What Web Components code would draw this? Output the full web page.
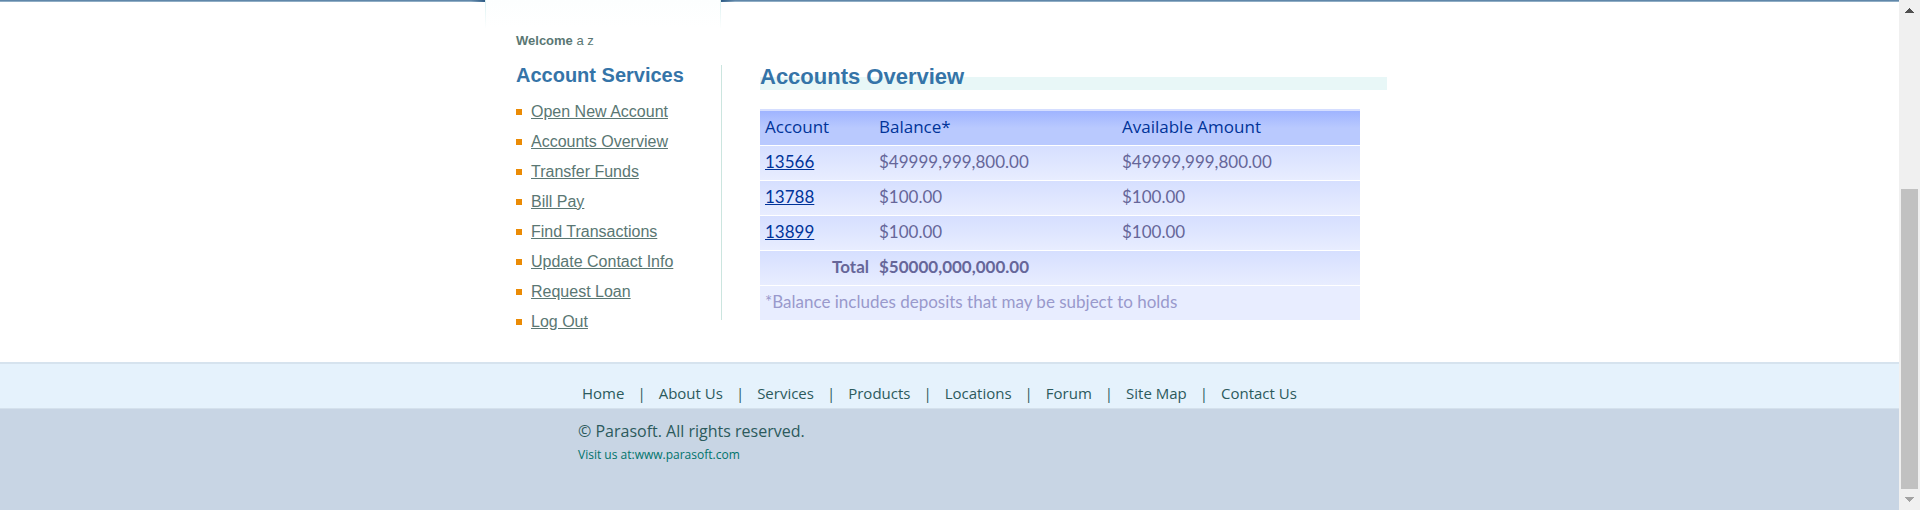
<!DOCTYPE html>
<html lang="en">
<head>
<meta charset="utf-8">
<title>ParaBank | Accounts Overview</title>
<style>
html, body { margin: 0; height: 100%; }
body { background: #c8d5e4; font-family: "Liberation Sans", Arial, sans-serif; }
</style>
</head>
<body>
<bank-page></bank-page>

<script>
function define(name, html) {
  const template = document.createElement("template");
  template.innerHTML = html;
  customElements.define(name, class extends HTMLElement {
    constructor() {
      super();
      this.attachShadow({ mode: "open" }).append(template.content.cloneNode(true));
    }
  });
}

define("header-edge", `
<style>
:host { display: grid; grid-template-columns: 1fr minmax(0, 929px) 1fr; height: 28px; }
.inner { display: grid; grid-template-columns: 236px 1fr; }
.line { height: 2px; background: linear-gradient(#6087a9 50%, #8fadc5 50%); }
.left { background: linear-gradient(90deg, transparent calc(100% - 14px), #2f5c86), linear-gradient(#6087a9 50%, #8fadc5 50%); }
.right { background: linear-gradient(270deg, transparent calc(100% - 14px), #2f5c86), linear-gradient(#6087a9 50%, #8fadc5 50%); }
.tab { box-sizing: border-box; border: solid; border-width: 0 1px;
  border-image: linear-gradient(#d8efef, #fff) 1; background: linear-gradient(#fcfefe, #fff); }
</style>
<div class="line left"></div>
<div class="inner"><div class="tab"></div><div class="line right"></div></div>
<div class="line"></div>`);

define("service-menu", `
<style>
:host { display: block; }
h2 { margin: 0; font: bold 20px/20px "Liberation Sans", Arial, sans-serif; color: #3574a8; }
ul { list-style: none; margin: 12px 0 0; padding: 0; }
li { display: flex; align-items: center; gap: 9px; height: 30px; font-size: 16px; line-height: 30px; }
li::before { content: ""; width: 6px; height: 6px; background: #eb8b05; }
a { color: #5a7773; }
</style>
<h2>Account Services</h2>
<ul>
<li><a href="#open">Open New Account</a></li>
<li><a href="#overview">Accounts Overview</a></li>
<li><a href="#transfer">Transfer Funds</a></li>
<li><a href="#billpay">Bill Pay</a></li>
<li><a href="#find">Find Transactions</a></li>
<li><a href="#contact">Update Contact Info</a></li>
<li><a href="#loan">Request Loan</a></li>
<li><a href="#logout">Log Out</a></li>
</ul>`);

define("section-title", `
<style>
:host { display: block; }
h1 { margin: 0; padding-bottom: 1px; font: bold 22px/24px "Liberation Sans", Arial, sans-serif; color: #3574a8;
  background: linear-gradient(#e8f7f7, #e8f7f7) bottom / 100% 13px no-repeat; }
</style>
<h1><slot></slot></h1>`);

define("account-table", `
<style>
:host { display: block; font-family: Lato, "Open Sans", sans-serif; }
table { width: 100%; max-width: 600px; table-layout: fixed; border-spacing: 0; border-top: 2px solid #d5deff; }
th, td { padding: 5px 5px 7px; font-size: 17px; line-height: 22px; text-align: left; color: #666699;
  background: linear-gradient(#d6dfff, #e8edff); border-bottom: 1px solid #fff; }
th { font-family: "Open Sans", sans-serif; font-weight: normal; color: #003399;
  background: linear-gradient(#9fb4ff, #b9c9fe 50%); }
th:first-child { width: 104px; }
td.sum { text-align: right; }
td b { font-weight: bold; }
tfoot td { background: #e8edff; color: #9999cc; border-bottom: 0; }
a { color: #003399; }
</style>
<table>
<thead><tr><th scope="col">Account</th><th scope="col">Balance*</th><th scope="col">Available Amount</th></tr></thead>
<tbody>
<tr><td><a href="#13566">13566</a></td><td>$49999,999,800.00</td><td>$49999,999,800.00</td></tr>
<tr><td><a href="#13788">13788</a></td><td>$100.00</td><td>$100.00</td></tr>
<tr><td><a href="#13899">13899</a></td><td>$100.00</td><td>$100.00</td></tr>
<tr><td class="sum"><b>Total</b></td><td><b>$50000,000,000.00</b></td><td></td></tr>
</tbody>
<tfoot><tr><td colspan="3">*Balance includes deposits that may be subject to holds</td></tr></tfoot>
</table>`);

define("bank-footer", `
<style>
:host { display: flex; flex-direction: column; flex: 1; font-family: "Open Sans", "Noto Sans", sans-serif; color: #2c5a5c; background: #c8d5e4; }
nav { background: #e5f2fc; border-top: 2px solid #d6e3ee; border-bottom: 1px solid #d4e1ec; }
.wrap { box-sizing: border-box; width: 100%; max-width: 743px; margin: 0 auto; }
ul { display: flex; list-style: none; padding: 17px 4px 3px; font-size: 15px; line-height: 24px; white-space: nowrap; }
li + li::before { content: "|"; margin: 0 13px; }
a { color: inherit; text-decoration: none; }
p { margin: 0; font-size: 16px; line-height: 24px; }
.copy { padding-top: 10px; }
.visit { font-size: 12px; color: #00736b; }
</style>
<nav aria-label="Footer"><ul class="wrap">
<li><a href="#home">Home</a></li><li><a href="#about">About Us</a></li><li><a href="#services">Services</a></li><li><a href="#products">Products</a></li><li><a href="#locations">Locations</a></li><li><a href="#forum">Forum</a></li><li><a href="#sitemap">Site Map</a></li><li><a href="#contactus">Contact Us</a></li>
</ul></nav>
<div class="wrap">
<p class="copy">© Parasoft. All rights reserved.</p>
<p class="visit">Visit us at:<a href="#parasoft">www.parasoft.com</a></p>
</div>`);

define("scroll-rail", `
<style>
:host { display: flex; flex-direction: column; background: #f0f0f0; }
button { display: grid; place-items: center; height: 21px; margin: 0; padding: 0; border: 0; background: none; }
svg { display: block; }
.track { flex: 1; display: flex; flex-direction: column; justify-content: flex-end; padding: 0 2px; }
.thumb { height: 64%; background: #c1c1c1; }
</style>
<button type="button" aria-label="Scroll up"><svg width="9" height="5" viewBox="0 0 9 5" shape-rendering="crispEdges"><path d="M4 0h1v1h1v1h1v1h1v1h1v1H0V4h1V3h1V2h1V1h1z" fill="#505050"/></svg></button>
<div class="track"><div class="thumb"></div></div>
<button type="button" aria-label="Scroll down"><svg width="9" height="5" viewBox="0 0 9 5" shape-rendering="crispEdges"><path d="M0 0h9v1H8v1H7v1H6v1H5v1H4V4H3V3H2V2H1V1H0z" fill="#a3a3a3"/></svg></button>`);

define("bank-page", `
<style>
:host { display: grid; grid-template-columns: minmax(0, 1fr) 21px; min-height: 100vh; }
.page { display: flex; flex-direction: column; background: #fff; }
main { box-sizing: border-box; width: 100%; max-width: 929px; margin: 0 auto; padding: 5px 27px 25px 31px; }
.welcome { margin: 0 0 16px; font-size: 13px; line-height: 16px; color: #5a7773; }
.columns { display: grid; grid-template-columns: 205px minmax(0, 1fr); align-items: start; }
.panel { border-left: 1px solid #cbe5df; padding-left: 38px; }
account-table { margin-top: 19px; }
</style>
<div class="page">
<header-edge></header-edge>
<main>
<p class="welcome"><b>Welcome</b> a z</p>
<div class="columns">
<service-menu></service-menu>
<section class="panel">
<section-title>Accounts Overview</section-title>
<account-table></account-table>
</section>
</div>
</main>
<bank-footer></bank-footer>
</div>
<scroll-rail></scroll-rail>`);
</script>
</body>
</html>
